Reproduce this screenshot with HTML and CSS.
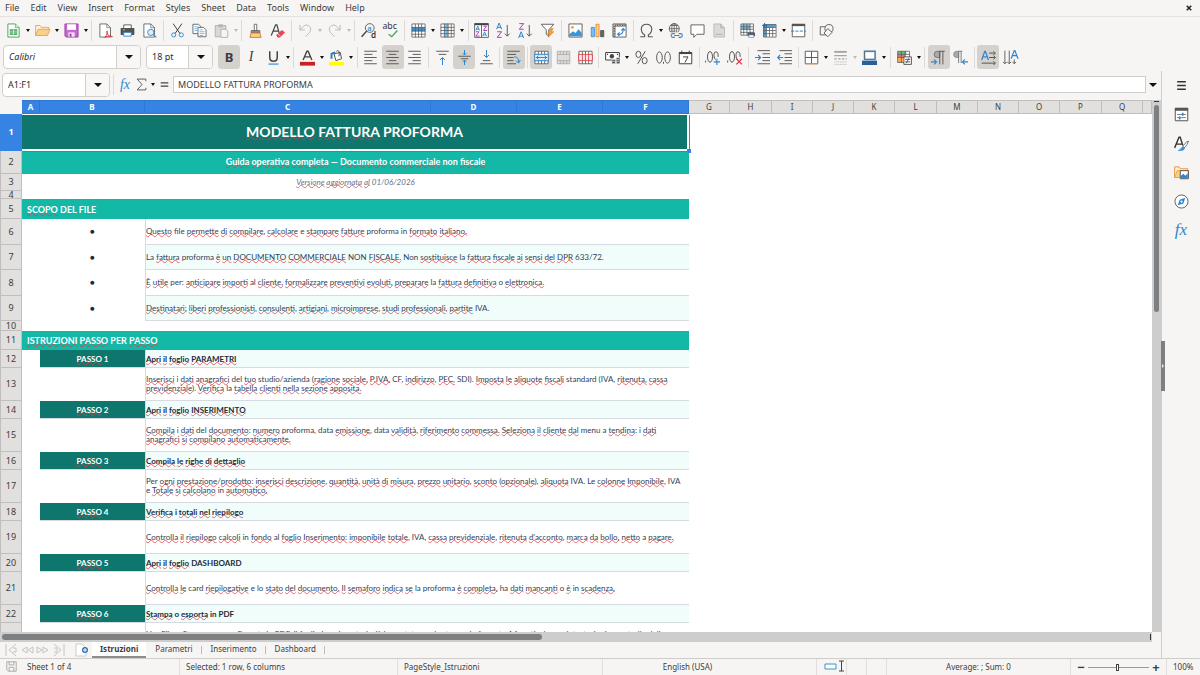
FILE: index.html
```html
<!DOCTYPE html>
<html lang="en">
<head>
<meta charset="utf-8">
<title>Fattura proforma</title>
<link rel="stylesheet" href="styles.css">
</head>
<body>
<div class="app">
<header class="menubar">
  <nav class="menus" aria-label="Menu">
    <button>File</button><button>Edit</button><button>View</button><button>Insert</button><button>Format</button><button>Styles</button><button>Sheet</button><button>Data</button><button>Tools</button><button>Window</button><button>Help</button>
  </nav>
  <button class="close" aria-label="Close document"><svg viewBox="0 0 8 8"><path d="M1 1l6 6M7 1L1 7" stroke="#222" stroke-width="2"/></svg></button>
</header>

<div class="toolbar standard" role="toolbar" aria-label="Standard">
  <button class="tb" aria-label="New"><svg viewBox="0 0 24 24"><path d="M3 1.500h12l6 6v15H3z" fill="#fff" stroke="#46a35e" stroke-width="1.500"/><path d="M15 1.500v6h6" fill="#c9ecd2" stroke="#46a35e"/><path d="M6 10h12v9H6z" fill="#3f9f57"/><path d="M6 13h12M6 16h12M12 10v9" stroke="#fff"/></svg></button><button class="dd" aria-label="New options"></button>
  <button class="tb" aria-label="Open"><svg viewBox="0 0 24 24"><path d="M1 20V4h7l2 3h12v4" fill="#fff3dd" stroke="#e8973e" stroke-width="1.300"/><path d="M1 20l4-10h19l-4 10z" fill="#fbd08b" stroke="#e8973e" stroke-width="1.300"/></svg></button><button class="dd" aria-label="Open options"></button>
  <button class="tb" aria-label="Save"><svg viewBox="0 0 24 24"><path d="M1.500 1.500h21v21h-19l-2-2z" fill="#c56ad0" stroke="#9b3fa8" stroke-width="1.500"/><path d="M5 2h14v9H5z" fill="#fff"/><path d="M7 15h10v7H7z" fill="#f6e6f8"/><path d="M9 17h3v5H9z" fill="#9b3fa8"/></svg></button><button class="dd" aria-label="Save options"></button>
  <span class="sep"></span>
  <button class="tb" aria-label="Export as PDF"><svg viewBox="0 0 24 24"><path d="M3 1.500h11l6 6v15H3z" fill="#fff" stroke="#555" stroke-width="1.300"/><path d="M14 1.500v6h6" fill="none" stroke="#555"/><path d="M11 23c3-3 5-8 4-10-2-1-1 4 1 6s6 4 7 3-8-2-12 1z" fill="none" stroke="#e0313f" stroke-width="1.500"/></svg></button>
  <button class="tb" aria-label="Print"><svg viewBox="0 0 24 24"><path d="M6 9V3h12v6" fill="#fff" stroke="#444" stroke-width="1.300"/><rect x="1" y="8" width="22" height="11" rx="1" fill="#4d5357"/><path d="M6 15h12v6H6z" fill="#fff" stroke="#3c87c8" stroke-width="1.500"/><path d="M5 11h3" stroke="#fff"/></svg></button>
  <button class="tb" aria-label="Print preview"><svg viewBox="0 0 24 24"><path d="M3 1.500h11l6 6v15H3z" fill="#fff" stroke="#555" stroke-width="1.300"/><path d="M14 1.500v6h6" fill="none" stroke="#555"/><circle cx="14" cy="15" r="5" fill="#d8edfb" stroke="#3c87c8" stroke-width="1.500"/><path d="M18 19l5 4" stroke="#3c87c8" stroke-width="2"/></svg></button>
  <span class="sep"></span>
  <button class="tb" aria-label="Cut"><svg viewBox="0 0 24 24" fill="none"><path d="M5 1l11 16M19 1L8 17" stroke="#444" stroke-width="1.600"/><circle cx="6" cy="19" r="3.300" stroke="#3593d8" stroke-width="1.600"/><circle cx="18" cy="19" r="3.300" stroke="#3593d8" stroke-width="1.600"/></svg></button>
  <button class="tb" aria-label="Copy"><svg viewBox="0 0 24 24"><path d="M1.500 2h9l3 3v12h-12z" fill="#fff" stroke="#555" stroke-width="1.300"/><path d="M4 6h5M4 9h4M4 12h4" stroke="#3593d8"/><path d="M9.500 7h9l4 4v11h-13z" fill="#fff" stroke="#555" stroke-width="1.300"/><path d="M12 11h5M12 14h8M12 17h8M12 20h6" stroke="#3593d8"/></svg></button>
  <button class="tb off" aria-label="Paste" disabled><svg viewBox="0 0 24 24"><path d="M2 4h17v18H2z" fill="#d8d8d6" stroke="#a8a8a6" stroke-width="1.300"/><path d="M7 2h7v5H7z" fill="#b4b4b2"/><path d="M11 10h8l3 3v10H11z" fill="#f4f4f2" stroke="#a8a8a6" stroke-width="1.300"/></svg></button><button class="dd off" aria-label="Paste options" disabled></button>
  <span class="sep"></span>
  <button class="tb" aria-label="Clone formatting"><svg viewBox="0 0 24 24"><path d="M10 2h4v10h-4z" fill="#fff" stroke="#555" stroke-width="1.300"/><path d="M5 12h14v4H5z" fill="#888" stroke="#555"/><path d="M5 16h14l2 7H3z" fill="#fbd08b" stroke="#e07b1d" stroke-width="1.500"/></svg></button>
  <button class="tb" aria-label="Clear formatting"><svg viewBox="0 0 24 24" fill="none"><path d="M2 20L9 3h2l4 14M5 13h8" stroke="#444" stroke-width="1.900"/><path d="M10 19l9-8 5 4-8 8h-4z" fill="#e9454f"/><path d="M12 17l5 4" stroke="#fff"/></svg></button>
  <span class="sep"></span>
  <button class="tb off" aria-label="Undo" disabled><svg viewBox="0 0 24 24" fill="none" stroke="#b7b7b5" stroke-width="1.500"><path d="M3 3v8h8M3 11l6-6c5-4 13 0 11 7-1 4-5 6-8 10"/></svg></button><button class="dd off" aria-label="Undo history" disabled></button>
  <button class="tb off" aria-label="Redo" disabled><svg viewBox="0 0 24 24" fill="none" stroke="#b7b7b5" stroke-width="1.500"><path d="M21 3v8h-8M21 11l-6-6C10 1 2 5 4 12c1 4 5 6 8 10"/></svg></button><button class="dd off" aria-label="Redo history" disabled></button>
  <span class="sep"></span>
  <button class="tb" aria-label="Find and replace"><svg viewBox="0 0 24 24" fill="none"><circle cx="14" cy="8" r="7" stroke="#555" stroke-width="1.400"/><path d="M9 13l-8 9" stroke="#444" stroke-width="2.400"/><text x="10" y="12" font-size="12" fill="#3593d8" class="gl b">a</text><text x="16" y="24" font-size="13" fill="#333" class="gl b">d</text></svg></button>
  <button class="tb" aria-label="Spelling"><svg viewBox="0 0 24 24"><text x="-1" y="10" font-size="14" fill="#333" class="gl">abc</text><path d="M9 18l5 4 9-10" fill="none" stroke="#3aa655" stroke-width="2"/></svg></button>
  <span class="sep"></span>
  <button class="tb" aria-label="Row"><svg viewBox="0 0 24 24"><path d="M1.500 1.500h21v21h-21z" fill="#fff"/><path d="M1 7h22v6H1z" fill="#3593d8"/><path d="M1.500 1.500h21v21h-21zM1 7h22M1 13h22M1 18h22M7 1v22M12 1v22M17 1v22" fill="none" stroke="#555" stroke-width="1.200"/></svg></button><button class="dd" aria-label="Row options"></button>
  <button class="tb" aria-label="Column"><svg viewBox="0 0 24 24"><path d="M1.500 1.500h21v21h-21z" fill="#fff"/><path d="M7 1h6v22H7z" fill="#7cc0ee"/><path d="M1.500 1.500h21v21h-21zM1 7h22M1 12h22M1 17h22M7 1v22M13 1v22M18 1v22" fill="none" stroke="#555" stroke-width="1.200"/></svg></button><button class="dd" aria-label="Column options"></button>
  <span class="sep"></span>
  <button class="tb" aria-label="Sort"><svg viewBox="0 0 24 24" fill="none"><path d="M1 1h22v22H1zM12 1v22" fill="#fff" stroke="#555" stroke-width="1.400"/><path d="M1 2h22" stroke="#444" stroke-width="3"/><path d="M3 12l3-7 3 7M4 10h4M14 21l3-7 3 7M15 19h4" stroke="#2f86cf" stroke-width="1.500"/><path d="M15 5h5l-5 7h6M3 14h5l-5 7h6" stroke="#a83fb5" stroke-width="1.500"/></svg></button>
  <button class="tb" aria-label="Sort ascending"><svg viewBox="0 0 24 24" fill="none"><path d="M1 10l4-10 4 10M2 7h6" stroke="#2f86cf" stroke-width="1.600"/><path d="M2 14h7l-7 9h7" stroke="#a83fb5" stroke-width="1.600"/><path d="M18 3v18M14 17l4 4 4-4" stroke="#555" stroke-width="1.500"/></svg></button>
  <button class="tb" aria-label="Sort descending"><svg viewBox="0 0 24 24" fill="none"><path d="M2 1h7l-7 9h7" stroke="#a83fb5" stroke-width="1.600"/><path d="M1 24l4-10 4 10M2 21h6" stroke="#2f86cf" stroke-width="1.600"/><path d="M18 3v18M14 17l4 4 4-4" stroke="#555" stroke-width="1.500"/></svg></button>
  <button class="tb" aria-label="AutoFilter"><svg viewBox="0 0 24 24"><path d="M2 2h20l-8 9v10l-4-3v-7z" fill="#fff" stroke="#555" stroke-width="1.400"/><path d="M17 9l-5 8h4l-3 6 9-9h-4l3-5z" fill="#f7a13b" stroke="#e07b1d"/></svg></button>
  <span class="sep"></span>
  <button class="tb" aria-label="Insert image"><svg viewBox="0 0 24 24"><path d="M1.500 1.500h21v21h-21z" fill="#fff" stroke="#555" stroke-width="1.400"/><circle cx="7" cy="7" r="2.300" fill="#f7a13b"/><path d="M2 21v-3l6-5 4 3 5-6 5 6v5z" fill="#3c93d6"/></svg></button>
  <button class="tb" aria-label="Insert chart"><svg viewBox="0 0 24 24" stroke-width="1.200"><path d="M2 7h5v15H2z" fill="#7cc0ee" stroke="#2f86cf"/><path d="M9.500 2h5v20h-5z" fill="#fbd08b" stroke="#e07b1d"/><path d="M17 12h5v10h-5z" fill="#666" stroke="#444"/></svg></button>
  <button class="tb" aria-label="Pivot table"><svg viewBox="0 0 24 24"><path d="M1.500 1.500h21v21h-21z" fill="#fff" stroke="#555" stroke-width="1.400"/><path d="M2 4h20M4 2v20" stroke="#555" stroke-width="3"/><path d="M4 2v20M2 4h20" stroke="#fff" stroke-dasharray="2 2"/><path d="M10 18c6 1 8-3 8-8M15 12l3-3 3 3M12 15l-3 3 3 3" fill="none" stroke="#2f86cf" stroke-width="1.700"/></svg></button>
  <span class="sep"></span>
  <button class="tb" aria-label="Special character"><svg viewBox="0 0 24 24"><path d="M2 22h7v-3C1 14 2 2 12 2s11 12 3 17v3h7" fill="none" stroke="#555" stroke-width="1.800"/></svg></button><button class="dd" aria-label="Special character options"></button>
  <button class="tb" aria-label="Hyperlink"><svg viewBox="0 0 24 24" fill="none"><circle cx="10" cy="9" r="8" stroke="#555" stroke-width="1.400"/><ellipse cx="10" cy="9" rx="4" ry="8" stroke="#555" stroke-width="1.200"/><path d="M2 9h16M4 4h12M4 13h8M10 1v16" stroke="#555" stroke-width="1.200"/><path d="M4 15h20v9H4z" fill="#f6f5f4"/><path d="M11 17H8a3 3 0 000 6h3M17 17h3a3 3 0 010 6h-3M10 20h8" stroke="#2f86cf" stroke-width="1.700"/></svg></button>
  <button class="tb" aria-label="Comment"><svg viewBox="0 0 24 24"><path d="M1.500 3h21v15H11l-5 5v-5H1.500z" fill="#fff" stroke="#555" stroke-width="1.400"/></svg></button>
  <button class="tb off" aria-label="Headers and footers" disabled><svg viewBox="0 0 24 24"><path d="M3 1.500h11l6 6v15H3z" fill="#dadad8" stroke="#b5b5b3" stroke-width="1.300"/><path d="M14 1.500v6h6M6 18h11" fill="none" stroke="#b0b0ae" stroke-width="1.500"/></svg></button>
  <span class="sep"></span>
  <button class="tb" aria-label="Print area"><svg viewBox="0 0 24 24"><path d="M1.500 1.500h20v18h-20z" fill="#fff"/><path d="M2 2h14v9H2z" fill="#7cc0ee"/><path d="M1.500 1.500h20v18h-20zM1 6h20M1 10h20M1 15h20M6 1v18M11 1v18M16 1v18" fill="none" stroke="#555" stroke-width="1.200"/><rect x="12" y="15" width="12" height="6" rx="1" fill="#555"/><path d="M14 19h8v4h-8z" fill="#fff" stroke="#2f86cf"/></svg></button>
  <button class="tb" aria-label="Freeze rows and columns"><svg viewBox="0 0 24 24"><path d="M3 3h19v19H3z" fill="#fff"/><path d="M2 2h20v5H2zM2 2h5v20H2z" fill="#4da3e0"/><path d="M2.500 2.500h20v20h-20zM2 7h20M2 12h20M2 17h20M7 2v20M12 7v15M17 7v15" fill="none" stroke="#555" stroke-width="1.200"/><path d="M4 0v8M0 4h8" stroke="#1d6fb8" stroke-width="1.500"/></svg></button><button class="dd" aria-label="Freeze options"></button>
  <button class="tb" aria-label="Split window"><svg viewBox="0 0 24 24"><path d="M2 2h20v20H2z" fill="#fff" stroke="#555" stroke-width="1.400"/><path d="M1.500 1.500h21V5h-21z" fill="#555"/><path d="M0 13h24" stroke="#2f86cf" stroke-width="1.600" stroke-dasharray="5 2"/></svg></button>
  <span class="sep"></span>
  <button class="tb" aria-label="Show draw functions"><svg viewBox="0 0 24 24" fill="#f6f5f4" stroke="#555" stroke-width="1.400"><path d="M2 6h12v13H2z"/><circle cx="16" cy="9" r="6.500"/><path d="M14 9l7 6-7 7-6-6z"/></svg></button>
</div>

<div class="toolbar formatting" role="toolbar" aria-label="Formatting">
  <div class="combo font"><input type="text" value="Calibri" aria-label="Font name"><button aria-label="Font list"></button></div>
  <div class="combo size"><input type="text" value="18 pt" aria-label="Font size"><button aria-label="Size list"></button></div>
  <div class="tools">
  <button class="tb on" aria-label="Bold" aria-pressed="true"><span class="bold">B</span></button>
  <button class="tb" aria-label="Italic"><span class="ital">I</span></button>
  <button class="tb" aria-label="Underline"><svg viewBox="0 0 24 24"><path d="M6 2v10c0 8 12 8 12 0V2" fill="none" stroke="#444" stroke-width="2.400"/><path d="M4 22.500h16" stroke="#2f86cf" stroke-width="1.800"/></svg></button><button class="dd" aria-label="Underline options"></button>
  <span class="sep"></span>
  <button class="tb" aria-label="Font colour"><svg viewBox="0 0 24 24"><path d="M5 16L11 2h2l6 14M8 11h8" fill="none" stroke="#444" stroke-width="2.200"/><path d="M0 19h24v6H0z" fill="#c9211e"/></svg></button><button class="dd" aria-label="Font colour options"></button>
  <button class="tb" aria-label="Highlighting"><svg viewBox="0 0 24 24"><path d="M8 6l10-2 2 10-9 3z" fill="#fff" stroke="#555" stroke-width="1.600"/><path d="M12 2c4-3 5 2 4 8" fill="none" stroke="#444" stroke-width="1.500"/><path d="M4 14V6l6-2" fill="none" stroke="#2f7bc0" stroke-width="3"/><path d="M0 19h24v6H0z" fill="#ff0"/></svg></button><button class="dd" aria-label="Highlighting options"></button>
  <span class="sep"></span>
  <button class="tb" aria-label="Align left"><svg viewBox="0 0 24 24"><path d="M2 2h20M2 7h13M2 12h20M2 17h13M2 22h20" stroke="#555" stroke-width="1.500"/></svg></button>
  <button class="tb on" aria-label="Align centre" aria-pressed="true"><svg viewBox="0 0 24 24"><path d="M2 2h20M6 7h12M2 12h20M6 17h12M2 22h20" stroke="#555" stroke-width="1.500"/></svg></button>
  <button class="tb" aria-label="Align right"><svg viewBox="0 0 24 24"><path d="M2 2h20M9 7h13M2 12h20M9 17h13M2 22h20" stroke="#555" stroke-width="1.500"/></svg></button>
  <span class="sep"></span>
  <button class="tb" aria-label="Align top"><svg viewBox="0 0 24 24" fill="none"><path d="M2 2h20M6 7h12" stroke="#555" stroke-width="1.500"/><path d="M12 24V12M8 16l4-4 4 4" stroke="#2f86cf" stroke-width="1.600"/></svg></button>
  <button class="tb on" aria-label="Centre vertically" aria-pressed="true"><svg viewBox="0 0 24 24" fill="none"><path d="M2 10h20M6 14h12" stroke="#555" stroke-width="1.500"/><path d="M12 0v8M9 5l3 3 3-3M12 24v-8M9 19l3-3 3 3" stroke="#2f86cf" stroke-width="1.600"/></svg></button>
  <button class="tb" aria-label="Align bottom"><svg viewBox="0 0 24 24" fill="none"><path d="M6 17h12M2 22h20" stroke="#555" stroke-width="1.500"/><path d="M12 0v12M8 8l4 4 4-4" stroke="#2f86cf" stroke-width="1.600"/></svg></button>
  <span class="sep"></span>
  <button class="tb on" aria-label="Wrap text" aria-pressed="true"><svg viewBox="0 0 24 24" fill="none"><path d="M2 2h20M2 7h14M2 12h10M2 17h10M2 22h14" stroke="#555" stroke-width="1.500"/><path d="M13 11c6 0 7 3 7 9M16 17l4 4 3-5" stroke="#2f86cf" stroke-width="1.600"/></svg></button>
  <span class="sep"></span>
  <button class="tb on" aria-label="Merge and centre" aria-pressed="true"><svg viewBox="0 0 24 24"><path d="M1.500 2h21v20h-21z" fill="#fff"/><path d="M1.500 2h21v20h-21zM1 7h22M1 17h22M7 2v5M12 2v5M17 2v5M7 17v5M12 17v5M17 17v5" fill="none" stroke="#555" stroke-width="1.300"/><path d="M1 7h22v10H1z" fill="#d8edfb" stroke="#2f86cf" stroke-width="1.300"/><path d="M3 12h18M7 9l-3 3 3 3M17 9l3 3-3 3" fill="none" stroke="#2f86cf" stroke-width="1.600"/></svg></button>
  <button class="tb off" aria-label="Merge cells" disabled><svg viewBox="0 0 24 24"><path d="M2 2h20v20H2zM2 7h20M2 17h20M7 2v5M12 2v5M17 2v5M7 17v5M12 17v5M17 17v5" fill="#dedddb" stroke="#a9a9a7" stroke-width="1.300"/></svg></button>
  <button class="tb" aria-label="Unmerge cells"><svg viewBox="0 0 24 24"><path d="M1.500 2h21v20h-21zM7 2v5M12 2v5M17 2v5M7 17v5M12 17v5M17 17v5" fill="#fff" stroke="#555" stroke-width="1.300"/><path d="M1 7h22v10H1zM7 7v10M12 7v10M17 7v10" fill="#fde4e5" stroke="#d9363f" stroke-width="1.300"/></svg></button>
  <span class="sep"></span>
  <button class="tb" aria-label="Currency"><svg viewBox="0 0 24 24"><path d="M1 4h22v12H1z" fill="#fff" stroke="#444" stroke-width="1.600"/><circle cx="11" cy="10" r="3.500" fill="#444"/><path d="M3 7h2M19 7h2" stroke="#444" stroke-width="2"/><path d="M11 15h6v7h-6zM18 12h6v10h-6z" fill="#555" stroke="#f6f5f4"/><path d="M12 18h4M19 15h4M19 18h4" stroke="#fff"/></svg></button><button class="dd" aria-label="Currency options"></button>
  <button class="tb" aria-label="Percent"><svg viewBox="0 0 24 24" fill="none" stroke="#555" stroke-width="1.600"><ellipse cx="7" cy="7" rx="4" ry="5"/><ellipse cx="17" cy="17" rx="4" ry="5"/><path d="M18 2L6 22"/></svg></button>
  <button class="tb" aria-label="Number"><svg viewBox="0 0 24 24" fill="none" stroke="#555" stroke-width="1.600"><ellipse cx="5.500" cy="12" rx="4.500" ry="9"/><ellipse cx="18.500" cy="12" rx="4.500" ry="9"/><path d="M12 19v3"/></svg></button>
  <button class="tb" aria-label="Date"><svg viewBox="0 0 24 24" fill="none" stroke="#444" stroke-width="1.600"><path d="M2 4h20v18H2z" fill="#fff"/><path d="M2 5h20" stroke-width="3"/><path d="M6 1v4M18 1v4M8 11h8l-5 9"/></svg></button>
  <span class="sep"></span>
  <button class="tb" aria-label="Add decimal"><svg viewBox="0 0 24 24" fill="none" stroke="#555" stroke-width="1.600"><path d="M1 17v3"/><ellipse cx="8" cy="11" rx="4" ry="8.500"/><path d="M17 15c-3 0-4-12 0-12s4 3 4 8"/><path d="M19 14v10M14 19h10" stroke="#2f86cf" stroke-width="1.800"/></svg></button>
  <button class="tb" aria-label="Remove decimal"><svg viewBox="0 0 24 24" fill="none" stroke="#555" stroke-width="1.600"><path d="M1 17v3"/><ellipse cx="8" cy="11" rx="4" ry="8.500"/><path d="M17 15c-3 0-4-12 0-12s4 3 4 8"/><path d="M15 14l9 9M24 14l-9 9" stroke="#e0313f" stroke-width="1.800"/></svg></button>
  <span class="sep"></span>
  <button class="tb" aria-label="Increase indent"><svg viewBox="0 0 24 24" fill="none"><path d="M4 1h20M12 6h12M12 12h12M12 17h12M4 22h20" stroke="#555" stroke-width="1.500"/><path d="M0 12h9M5 8l4 4-4 4" stroke="#2f86cf" stroke-width="1.700"/></svg></button>
  <button class="tb" aria-label="Decrease indent"><svg viewBox="0 0 24 24" fill="none"><path d="M4 1h20M12 6h12M12 12h12M12 17h12M4 22h20" stroke="#555" stroke-width="1.500"/><path d="M1 12h9M5 8l-4 4 4 4" stroke="#2f86cf" stroke-width="1.700"/></svg></button>
  <span class="sep"></span>
  <button class="tb" aria-label="Borders"><svg viewBox="0 0 24 24"><path d="M2 2h20v20H2zM2 12h20M12 2v20" fill="#fff" stroke="#555" stroke-width="1.500"/><path d="M2 22h20" stroke="#e8973e" stroke-width="1.500"/></svg></button><button class="dd" aria-label="Border options"></button>
  <button class="tb off" aria-label="Border style" disabled><svg viewBox="0 0 24 24" fill="none" stroke="#a5a5a3"><path d="M2 3h20" stroke-width="3"/><path d="M2 9h20" stroke-width="2"/><path d="M2 14h20" stroke-width="2" stroke-dasharray="4 2"/><path d="M2 19h20M2 23h20" stroke-dasharray="2 1"/></svg></button><button class="dd off" aria-label="Border style options" disabled></button>
  <button class="tb" aria-label="Border colour"><svg viewBox="0 0 24 24"><path d="M4 2h17v13H4z" fill="#fff" stroke="#8ab8de" stroke-width="3"/><path d="M4 2h17v13H4z" fill="none" stroke="#444"/><path d="M0 17h24v7H0z" fill="#2a6099"/></svg></button><button class="dd" aria-label="Border colour options"></button>
  <span class="sep"></span>
  <button class="tb" aria-label="Conditional formatting"><svg viewBox="0 0 24 24"><path d="M1 2h19v18H1z" fill="#fff"/><path d="M1 2h14v5H1z" fill="#5fc176"/><path d="M1 7h12v5H1z" fill="#ee6b72"/><path d="M1 12h9v8H1z" fill="#f9ae55"/><path d="M1 2h19v18H1zM1 7h19M1 12h19M7 2v18M13 2v18" fill="none" stroke="#555" stroke-width="1.200"/><path d="M11 11h12v12H11z" fill="#fff" stroke="#444" stroke-width="1.400"/><path d="M13 15h8M13 19h8M19 13l-4 8" stroke="#444" stroke-width="1.300"/></svg></button><button class="dd" aria-label="Conditional options"></button>
  <span class="sep"></span>
  <button class="tb on" aria-label="Left to right" aria-pressed="true"><svg viewBox="0 0 24 24"><path d="M14 2H10a5 5 0 000 10h4z" fill="#aaa" stroke="#555"/><path d="M14 23V2h8M19 2v21" fill="none" stroke="#555" stroke-width="1.500"/><path d="M0 19h9M5 15l4 4-4 4" fill="none" stroke="#2f86cf" stroke-width="1.700"/></svg></button>
  <button class="tb" aria-label="Right to left"><svg viewBox="0 0 24 24"><path d="M9 2H6a5 5 0 000 10h3z" fill="#aaa" stroke="#777"/><path d="M9 21V2h6M13 2v19" fill="none" stroke="#777" stroke-width="1.500"/><path d="M15 19h9M19 15l-4 4 4 4" fill="none" stroke="#2f86cf" stroke-width="1.700"/></svg></button>
  <span class="sep"></span>
  <button class="tb on" aria-label="Text horizontal" aria-pressed="true"><svg viewBox="0 0 24 24" fill="none"><path d="M1 16L6 2h1l5 14M3 11h7" stroke="#2f86cf" stroke-width="2"/><path d="M13 5h9M13 12h9M1 21h21M20 2l3 3-3 3M20 9l3 3-3 3M20 18l3 3-3 3" stroke="#444" stroke-width="1.400"/></svg></button>
  <button class="tb" aria-label="Text vertical"><svg viewBox="0 0 24 24" fill="none"><path d="M13 14L18 1h1l5 13M15 9h7" stroke="#2f86cf" stroke-width="2"/><path d="M3 1v21M10 1v21M18 15v7M0 19l3 3 3-3M7 19l3 3 3-3M15 19l3 3 3-3" stroke="#555" stroke-width="1.400"/></svg></button>
  </div>
</div>

<div class="work">
<main class="doc">
  <div class="formulabar">
    <div class="combo name"><input type="text" value="A1:F1" aria-label="Name box"><button aria-label="Name list"></button></div>
    <span class="sep"></span>
    <button class="fb" aria-label="Function wizard"><span class="fx">fx</span></button>
    <button class="fb" aria-label="Sum"><svg viewBox="0 0 24 24"><path d="M20 6V2H4l9 10L4 22h16v-4" fill="none" stroke="#555" stroke-width="1.700"/></svg></button><button class="dd" aria-label="Sum options"></button>
    <button class="fb" aria-label="Formula"><svg viewBox="0 0 24 24"><path d="M5 9h14M5 15h14" stroke="#444" stroke-width="2.500"/></svg></button>
    <input class="formula" type="text" value="MODELLO FATTURA PROFORMA" aria-label="Input line">
    <button class="dd big" aria-label="Expand formula bar"></button>
  </div>
  <div class="gridrow">
    <div class="grid">
      <table>
        <colgroup><col class="c-h"><col class="c-a"><col class="c-b"><col class="c-c"><col class="c-d"><col class="c-d"><col class="c-d"><col class="c-g"><col class="c-w"><col class="c-g"><col class="c-g"><col class="c-g"><col class="c-w"><col class="c-g"><col class="c-g"><col class="c-g"><col class="c-w"><col class="c-g"><col></colgroup>
        <thead><tr><td class="corner"></td><th class="s">A</th><th class="s">B</th><th class="s">C</th><th class="s">D</th><th class="s">E</th><th class="s">F</th><th>G</th><th>H</th><th>I</th><th>J</th><th>K</th><th>L</th><th>M</th><th>N</th><th>O</th><th>P</th><th>Q</th><th></th></tr></thead>
        <tbody>
        <tr class="r1"><th class="s">1</th><td colspan="6" class="title"><u>MODELLO</u> <u>FATTURA</u> PROFORMA<i class="handle"></i></td></tr>
        <tr class="r2"><th>2</th><td colspan="6" class="sub"><u>Guida</u> <u>operativa</u> <u>completa</u> — <u>Documento</u> <u>commerciale</u> non <u>fiscale</u></td></tr>
        <tr class="r3"><th>3</th><td colspan="6" class="ver"><u>Versione</u> <u>aggiornata</u> <u>al</u> 01/06/2026</td></tr>
        <tr class="r4"><th>4</th><td colspan="6"></td></tr>
        <tr class="r5"><th>5</th><td colspan="6" class="sec"><u>SCOPO</u> DEL FILE</td></tr>
        <tr class="r6"><th>6</th><td></td><td class="dot">●</td><td colspan="4" class="tx"><u>Questo</u> file <u>permette</u> <u>di</u> <u>compilare</u>, <u>calcolare</u> e <u>stampare</u> <u>fatture</u> proforma in <u>formato</u> <u>italiano.</u></td></tr>
        <tr class="r7"><th>7</th><td></td><td class="dot">●</td><td colspan="4" class="tx alt">La <u>fattura</u> proforma <u>è</u> <u>un</u> <u>DOCUMENTO</u> <u>COMMERCIALE</u> NON <u>FISCALE.</u> Non <u>sostituisce</u> la <u>fattura</u> <u>fiscale</u> <u>ai</u> <u>sensi</u> <u>del</u> <u>DPR</u> 633/72.</td></tr>
        <tr class="r6"><th>8</th><td></td><td class="dot">●</td><td colspan="4" class="tx"><u>È</u> <u>utile</u> per: <u>anticipare</u> <u>importi</u> al <u>cliente,</u> <u>formalizzare</u> <u>preventivi</u> <u>evoluti,</u> <u>preparare</u> la <u>fattura</u> <u>definitiva</u> o <u>elettronica.</u></td></tr>
        <tr class="r7"><th>9</th><td></td><td class="dot">●</td><td colspan="4" class="tx alt"><u>Destinatari:</u> <u>liberi</u> <u>professionisti</u>, <u>consulenti</u>, <u>artigiani</u>, <u>microimprese</u>, <u>studi</u> <u>professionali</u>, <u>partite</u> IVA.</td></tr>
        <tr class="r10"><th>10</th><td colspan="6"></td></tr>
        <tr class="r11"><th>11</th><td colspan="6" class="sec"><u>ISTRUZIONI</u> <u>PASSO</u> PER <u>PASSO</u></td></tr>
        <tr class="st"><th>12</th><td></td><td class="step"><u>PASSO</u> 1</td><td colspan="4" class="hd"><u>Apri</u> <u>il</u> <u>foglio</u> <u>PARAMETRI</u></td></tr>
        <tr class="bd"><th>13</th><td></td><td></td><td colspan="4" class="tx"><u>Inserisci</u> i <u>dati</u> <u>anagrafici</u> del <u>tuo</u> studio/azienda (<u>ragione</u> <u>sociale,</u> <u>P.IVA,</u> CF, <u>indirizzo</u>, <u>PEC,</u> SDI). <u>Imposta</u> <u>le</u> <u>aliquote</u> <u>fiscali</u> standard (IVA, <u>ritenuta,</u> <u>cassa</u><br><u>previdenziale</u>). <u>Verifica</u> la <u>tabella</u> <u>clienti</u> <u>nella</u> <u>sezione</u> <u>apposita.</u></td></tr>
        <tr class="st"><th>14</th><td></td><td class="step"><u>PASSO</u> 2</td><td colspan="4" class="hd"><u>Apri</u> <u>il</u> <u>foglio</u> <u>INSERIMENTO</u></td></tr>
        <tr class="bd"><th>15</th><td></td><td></td><td colspan="4" class="tx"><u>Compila</u> i <u>dati</u> del <u>documento</u>: <u>numero</u> proforma, data <u>emissione</u>, data <u>validità</u>, <u>riferimento</u> <u>commessa.</u> <u>Seleziona</u> <u>il</u> <u>cliente</u> <u>dal</u> menu a <u>tendina</u>: i <u>dati</u><br><u>anagrafici</u> <u>si</u> <u>compilano</u> <u>automaticamente.</u></td></tr>
        <tr class="st"><th>16</th><td></td><td class="step"><u>PASSO</u> 3</td><td colspan="4" class="hd"><u>Compila</u> <u>le</u> <u>righe</u> <u>di</u> <u>dettaglio</u></td></tr>
        <tr class="bd"><th>17</th><td></td><td></td><td colspan="4" class="tx">Per <u>ogni</u> <u>prestazione</u>/<u>prodotto</u>: <u>inserisci</u> <u>descrizione</u>, <u>quantità</u>, <u>unità</u> <u>di</u> <u>misura</u>, <u>prezzo</u> <u>unitario</u>, <u>sconto</u> (<u>opzionale</u>), <u>aliquota</u> IVA. Le <u>colonne</u> <u>Imponibile</u>, IVA<br>e <u>Totale</u> <u>si</u> <u>calcolano</u> in <u>automatico.</u></td></tr>
        <tr class="st"><th>18</th><td></td><td class="step"><u>PASSO</u> 4</td><td colspan="4" class="hd"><u>Verifica</u> i <u>totali</u> <u>nel</u> <u>riepilogo</u></td></tr>
        <tr class="bd"><th>19</th><td></td><td></td><td colspan="4" class="tx"><u>Controlla</u> <u>il</u> <u>riepilogo</u> <u>calcoli</u> in <u>fondo</u> al <u>foglio</u> <u>Inserimento:</u> <u>imponibile</u> <u>totale</u>, IVA, <u>cassa</u> <u>previdenziale</u>, <u>ritenuta</u> <u>d'acconto</u>, <u>marca</u> <u>da</u> <u>bollo,</u> <u>netto</u> a <u>pagare.</u></td></tr>
        <tr class="st"><th>20</th><td></td><td class="step"><u>PASSO</u> 5</td><td colspan="4" class="hd"><u>Apri</u> <u>il</u> <u>foglio</u> DASHBOARD</td></tr>
        <tr class="bd"><th>21</th><td></td><td></td><td colspan="4" class="tx"><u>Controlla</u> <u>le</u> card <u>riepilogative</u> e lo <u>stato</u> <u>del</u> <u>documento.</u> <u>Il</u> <u>semaforo</u> <u>indica</u> <u>se</u> la proforma <u>è</u> <u>completa,</u> ha <u>dati</u> <u>mancanti</u> o <u>è</u> in <u>scadenza.</u></td></tr>
        <tr class="st"><th>22</th><td></td><td class="step"><u>PASSO</u> 6</td><td colspan="4" class="hd"><u>Stampa</u> o <u>esporta</u> in PDF</td></tr>
        <tr class="bd"><th></th><td></td><td></td><td colspan="4" class="tx">Usa File &gt; Stampa oppure Esporta in PDF. Il foglio Inserimento è già impostato per la stampa in formato A4 verticale con intestazioni e controllo delle<br>celle.</td></tr>
        </tbody>
      </table>
    </div>
    <div class="vscroll"><div class="cap"></div><div class="thumb"></div></div>
  </div>
  <div class="hscroll"><div class="thumb"></div><div class="cap"></div></div>
  <div class="tabs">
    <div class="navs">
      <button aria-label="First sheet"><svg viewBox="0 0 14 14"><path d="M2 1v12M12 1L5 7l7 6M9 5h3v4H9"/></svg></button><button aria-label="Previous sheet"><svg viewBox="0 0 14 14"><path d="M7 4v6L2 7zM13 4v6L8 7z"/></svg></button><button aria-label="Next sheet"><svg viewBox="0 0 14 14"><path d="M1 4v6l5-3zM7 4v6l5-3z"/></svg></button><button aria-label="Last sheet"><svg viewBox="0 0 14 14"><path d="M12 1v12M2 1l7 6-7 6M2 5h3v4H2"/></svg></button>
      <button class="add" aria-label="Add sheet"><svg viewBox="0 0 14 14"><path d="M1 1h6l4 4v8H1z" fill="#fff" stroke="#ccc"/><circle cx="10" cy="7" r="3" fill="#2f6fb8" stroke="none"/><path d="M10 5v4M8 7h4" stroke="#fff"/></svg></button>
    </div>
    <button class="tab active">Istruzioni</button><button class="tab">Parametri</button><button class="tab">Inserimento</button><button class="tab">Dashboard</button>
  </div>
</main>
<aside class="side">
  <i class="grip"></i>
  <button aria-label="Sidebar settings"><svg viewBox="0 0 24 24"><path d="M4 5h16M4 12h16M4 19h16" stroke="#333" stroke-width="2.600"/></svg></button>
  <button aria-label="Properties"><svg viewBox="0 0 24 24"><path d="M2 2h20v20H2z" fill="#fff" stroke="#555" stroke-width="1.600"/><path d="M1.500 1.500h21V6h-21z" fill="#555"/><path d="M5 12h14M5 17h14" stroke="#777" stroke-width="1.500"/><path d="M14 9v5M9 15v5" stroke="#2f86cf" stroke-width="2.500"/></svg></button>
  <button aria-label="Styles"><svg viewBox="0 0 24 24"><path d="M1 19L8 2h2l4 13M4 13h9" fill="none" stroke="#333" stroke-width="2.200"/><path d="M23 8c-4 2-8 6-9 10l2 1c4-3 6-7 7-11z" fill="#fff" stroke="#555" stroke-width="1.300"/><path d="M14 18c-3 0-2 4-7 5 4 1 10 0 10-4z" fill="#3c93d6" stroke="#2f86cf"/></svg></button>
  <button aria-label="Gallery"><svg viewBox="0 0 24 24"><path d="M1 20V3h7l2 3h12v5" fill="#fff3dd" stroke="#e8973e" stroke-width="1.600"/><path d="M1 20l4-11h18v11z" fill="#fbd08b" stroke="#e8973e" stroke-width="1.300"/><path d="M10 9h13v13H10z" fill="#fff" stroke="#555" stroke-width="1.600"/><path d="M11 21v-4l4-3 3 3 4-4v8z" fill="#2f86cf"/></svg></button>
  <button aria-label="Navigator"><svg viewBox="0 0 24 24"><circle cx="12" cy="12" r="10.500" fill="#fff" stroke="#666" stroke-width="1.600"/><path d="M18 6l-3 9-9 3 3-9z" fill="#2f86cf"/><circle cx="12" cy="12" r="1.800" fill="#fff"/></svg></button>
  <button aria-label="Functions"><span class="fx lg">fx</span></button>
</aside>
</div>

<footer class="status">
  <div class="f-save"><svg viewBox="0 0 14 14"><path d="M1 1h12v12H3l-2-2zM4 1v4h6V1M4 13V8h6v5" fill="#f6f5f4" stroke="#999"/></svg></div>
  <div class="f-sheet">Sheet 1 of 4</div>
  <div class="f-sel">Selected: 1 row, 6 columns</div>
  <div class="f-page">PageStyle_Istruzioni</div>
  <div class="f-lang">English (USA)</div>
  <div class="f-ins"><svg viewBox="0 0 22 14"><path d="M2 5h11v5H2z" fill="#fff" stroke="#3c93c6"/><path d="M16 2h5M18.500 2v10M16 12h5" fill="none" stroke="#444"/></svg></div>
  <div class="f-e"></div><div class="f-e"></div>
  <div class="f-sum">Average: ; Sum: 0</div>
  <div class="f-zoom"><button aria-label="Zoom out">−</button><input type="range" min="0" max="100" value="48" aria-label="Zoom"><button aria-label="Zoom in">+</button></div>
  <div class="f-pct">100%</div>
</footer>
</div>
</body>
</html>
```
FILE: styles.css
```css
* { box-sizing: border-box; }
body { margin: 0; font-family: "Noto Sans", sans-serif; font-size: 9px; color: #3d3d3d; background: #f6f5f4; }
button { font: inherit; color: inherit; border: 0; padding: 0; background: none; }
input { font: inherit; color: inherit; }
svg { display: block; }
.app { display: flex; flex-direction: column; height: 100vh; overflow: hidden; }

.menubar { display: flex; justify-content: space-between; height: 17px; flex: none; border-bottom: 1px solid #e4e2e0; }
.menus { display: flex; padding-left: 5px; gap: 11px; }
.menus button { line-height: 16px; }
.close { width: 22px; display: grid; place-items: center; }
.close svg { width: 6px; height: 6px; }

.toolbar { display: flex; align-items: center; flex: none; }
.standard { height: 27px; max-width: 837px; padding-left: 2px; }
.formatting { height: 27px; padding: 0 0 1px 3px; gap: 5px; }
.tools { display: flex; align-items: center; width: 100%; max-width: 803px; }
.tb { width: 22px; height: 24px; flex: none; display: grid; place-items: center; border-radius: 3px; }
.tb svg { width: 15px; height: 15px; overflow: visible; }
.tb.on { background: #d5d1cd; }
.gl { font-family: "Noto Sans", sans-serif; }
.gl.b { font-weight: 600; }
.bold { font-size: 13px; line-height: 16px; font-weight: 700; }
.ital { font: italic 14px/16px "Liberation Serif", serif; }
.dd { width: 7px; height: 20px; flex: none; display: grid; place-items: center; }
.dd::after, .combo button::after { content: ""; border: 2px solid transparent; border-top: 3px solid #111; border-bottom: 0; }
.dd.off::after { border-top-color: #bbb; }
.sep { flex: 1 1 5px; height: 21px; min-width: 5px; background: linear-gradient(#dddbd9, #dddbd9) center / 1px 100% no-repeat; }

.combo { display: flex; height: 24px; border: 1px solid #d2cec9; border-radius: 4px; background: #fff; overflow: hidden; flex: none; }
.combo input { flex: 1; min-width: 0; border: 0; padding: 0 0 1px 5px; background: none; outline: 0; color: #2b2b2b; }
.combo button { width: 24px; border-left: 1px solid #d2cec9; background: #f8f7f6; display: grid; place-items: center; }
.combo button::after { border-width: 4px 4px 0; }
.combo.font { width: 138px; }
.combo.font input { font-style: italic; }
.combo.size { width: 67px; }
.combo.name { width: 108px; }

.work { display: flex; flex: 1; min-height: 0; }
.doc { flex: 1; min-width: 0; display: flex; flex-direction: column; }
.formulabar { display: flex; align-items: center; height: 29px; padding: 0 1px 2px 2px; flex: none; }
.formulabar .sep { flex: 0 0 7px; }
.fb { width: 16px; height: 20px; display: grid; place-items: center; flex: none; }
.fb svg { width: 13px; height: 13px; }
.fx { font: italic 14px/16px "Liberation Serif", serif; color: #2f86cf; }
.fx.lg { font-size: 17px; }
.formula { flex: 1; min-width: 0; height: 17px; margin-left: 1px; border: 1px solid #cfccc9; padding: 0 4px; background: #fff; outline: 0; }
.dd.big { width: 14px; }
.dd.big::after { border-width: 4px 4px 0; }

.gridrow { display: flex; flex: 1; min-height: 0; }
.grid { flex: 1; min-width: 0; overflow: hidden; background: #fff; }
table { table-layout: fixed; width: 100%; border-collapse: separate; border-spacing: 0; }
th, td { padding: 0; overflow: hidden; white-space: nowrap; vertical-align: middle; }
.c-h { width: 22px; } .c-a { width: 18px; } .c-b { width: 105px; } .c-c { width: 286px; } .c-d { width: 86px; } .c-g { width: 41px; } .c-w { width: 42px; }
thead tr { height: 14px; }
thead th { font-weight: 400; font-size: 8px; line-height: 12px; background: #e1e0df; border-right: 1px solid #c0bfbe; border-top: 1px solid #c0bfbe; border-bottom: 1px solid #c0bfbe; }
thead th.s { background: #3584e4; color: #fff; font-weight: 700; border-color: #2f78d2; }
.corner { background: #f6f5f4; }
tbody th { font-weight: 400; font-size: 9px; line-height: 8px; background: #e1e0df; border-right: 1px solid #c0bfbe; border-bottom: 1px solid #c0bfbe; border-left: 1px solid #c0bfbe; }
tbody th.s { background: #3584e4; color: #fff; font-weight: 700; border-color: #3584e4; }
tbody td { font-family: Lato, sans-serif; }
.r1 { height: 37px; } .r2 { height: 23px; } .r3 { height: 17px; } .r4 { height: 8px; } .r5 { height: 20px; }
.r6 { height: 26px; } .r7 { height: 25px; } .r10 { height: 10px; } .r11 { height: 19px; } .st { height: 18px; } .bd { height: 33px; }
.r4 th, .r10 th { line-height: 7px; }
u { text-decoration: underline wavy #e0393fbf 1px; text-underline-offset: -1px; text-decoration-skip-ink: none; }
.title { position: relative; overflow: visible; background: #0f766e; color: #fff; text-align: center; font-size: 14px; line-height: 17px; font-weight: 700; padding-bottom: 2px; border: 1px solid #fff; border-width: 1px 2px 2px 0; box-shadow: 1px 1px 0 #3584e4; }
.handle { position: absolute; right: -4px; bottom: -4px; width: 4px; height: 4px; background: #3584e4; }
.sub { background: #14b8a6; color: #fff; text-align: center; font-size: 9px; line-height: 11px; font-weight: 700; padding-bottom: 2px; }
.ver { text-align: center; font-size: 8px; line-height: 10px; font-style: italic; color: #64748b; padding-bottom: 2px; }
.sec { background: #14b8a6; color: #fff; font-size: 9px; line-height: 11px; font-weight: 700; padding-left: 5px; }
.dot { text-align: center; font-size: 8px; line-height: 10px; padding-bottom: 2px; color: #1e293b; }
.tx { font-size: 8px; line-height: 9px; color: #334155; border-left: 1px solid #d5dbe0; border-bottom: 1px solid #d5dbe0; }
.alt { background: #f0fdfa; }
.step { background: #0f766e; color: #fff; text-align: center; font-size: 8px; line-height: 10px; font-weight: 700; border-bottom: 1px solid #d5dbe0; }
.hd { background: #f0fdfa; color: #1e293b; font-size: 8px; line-height: 10px; font-weight: 700; border-left: 1px solid #d5dbe0; border-bottom: 1px solid #d5dbe0; }

.vscroll { width: 9px; background: #cdcdcd; flex: none; padding: 1px 2px; }
.vscroll .cap { height: 1px; background: #333; margin-bottom: 3px; }
.vscroll .thumb { height: 39%; border-radius: 3px; background: #7d7f80; }
.hscroll { height: 10px; margin-right: 9px; background: #cdcdcd; display: flex; justify-content: space-between; padding: 2px 1px 2px 2px; flex: none; }
.hscroll .thumb { width: 47%; border-radius: 3px; background: #7d7f80; }
.hscroll .cap { width: 1px; background: #333; }

.tabs { display: flex; height: 16px; flex: none; font-size: 8px; }
.navs { display: flex; padding-left: 4px; align-items: center; width: 92px; }
.navs button { width: 16px; }
.navs svg { width: 14px; height: 14px; fill: none; stroke: #c4c4c2; }
.navs .add { margin-left: 7px; }
.tab { padding: 0 9px 3px; line-height: 13px; position: relative; }
.tab:not(.active)::after { content: ""; position: absolute; right: 0; top: 4px; height: 8px; width: 1px; background: #bbb; }
.tab.active { background: #fff; font-weight: 700; border-bottom: 2px solid #8d8d8d; padding: 0 8px 1px; }

.side { width: 39px; border-left: 1px solid #cfccc9; display: flex; flex-direction: column; align-items: center; padding-top: 4px; gap: 9px; position: relative; flex: none; }
.side button { height: 20px; width: 24px; display: grid; place-items: center; }
.side svg { width: 15px; height: 15px; overflow: visible; }
.side button:first-of-type svg { width: 13px; height: 13px; }
.grip { position: absolute; left: -1px; top: 46%; width: 4px; height: 50px; background: #7d7f80; display: grid; place-items: center; }
.grip::after { content: ""; border: 2px solid transparent; border-left-color: #eee; border-right: 0; }

.status { display: flex; height: 17px; flex: none; border-top: 1px solid #cfccc9; font-size: 8px; line-height: 15px; }
.status > div { border-right: 1px solid #e2e0de; padding: 0 6px; white-space: nowrap; }
.status > .f-save { width: 22px; border: 0; }
.f-save svg { width: 11px; height: 11px; margin-top: 2px; }
.status > .f-sheet { width: 158px; padding-left: 5px; }
.f-sel { width: 218px; }
.f-page { width: 205px; }
.status > .f-lang { flex: 1; text-align: center; padding-right: 50px; }
.f-ins { width: 30px; }
.f-ins svg { width: 22px; height: 14px; }
.f-e { width: 20px; }
.f-sum { width: 184px; text-align: center; }
.f-zoom { width: 96px; display: flex; align-items: center; gap: 3px; }
.f-zoom button { font-size: 13px; line-height: 13px; font-weight: 700; width: 8px; }
.f-zoom input { appearance: none; flex: 1; min-width: 0; height: 10px; margin: 0; background: linear-gradient(#999, #999) center / 100% 1px no-repeat; }
.f-zoom input::-webkit-slider-thumb { appearance: none; width: 3px; height: 7px; border: 1px solid #444; background: #fff; }
.status > .f-pct { width: 33px; border: 0; }
```
